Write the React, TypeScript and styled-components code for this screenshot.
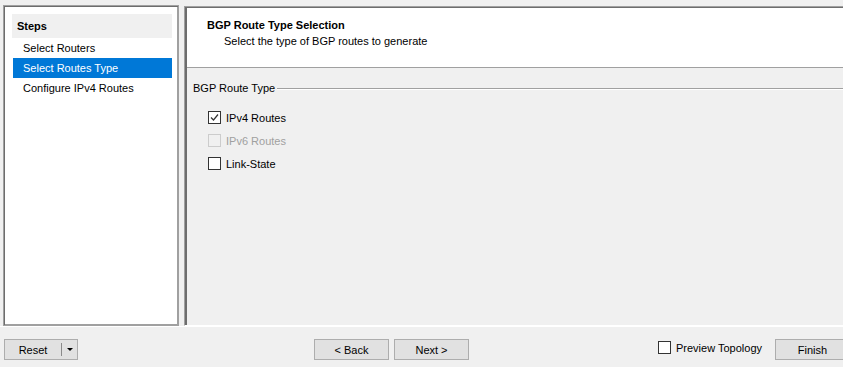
import React from 'react'
import styled, { createGlobalStyle } from 'styled-components'

const GlobalStyle = createGlobalStyle`
    html, body {
        margin: 0;
        padding: 0;
        background: #f0f0f0;
        font-family: "Liberation Sans", Arial, sans-serif;
        font-size: 11px;
        color: #000;
    }
`

const StyledWindow = styled.div`
    width: 843px;
    height: 367px;
    display: flex;
    flex-direction: column;
    overflow: hidden;
    background: #f0f0f0;
`

const StyledMain = styled.div`
    display: flex;
    align-items: flex-start;
    height: 326px;
    padding: 5px 0 0 3px;
    box-sizing: border-box;
    gap: 5px;
`

const StyledStepsPanel = styled.div`
    width: 176px;
    height: 321px;
    box-sizing: border-box;
    background: #fff;
    border: 1px solid #a0a0a0;
    box-shadow: inset 1px 1px 0 #6d6d6d, inset -1px -1px 0 #a0a0a0;
    padding: 8px 6px 0 8px;
`

const StyledStepsHeader = styled.div`
    height: 24px;
    display: flex;
    align-items: center;
    padding-left: 5px;
    background: #f0f0f0;
    font-weight: bold;
`

const StyledStepItem = styled.div<{ $active?: boolean }>`
    height: 20px;
    display: flex;
    align-items: center;
    margin-left: 1px;
    padding-left: 10px;
    background: ${p => (p.$active ? '#0078d7' : 'transparent')};
    color: ${p => (p.$active ? '#fff' : '#000')};
`

const StyledContentPanel = styled.div`
    flex: 1;
    height: 320px;
    margin-top: 1px;
    margin-right: -6px;
    box-sizing: border-box;
    border: 1px solid #a0a0a0;
    border-bottom-color: #fff;
    box-shadow: inset 2px 1px 0 #6d6d6d;
    display: flex;
    flex-direction: column;
`

const StyledHeader = styled.div`
    height: 60px;
    margin: 1px 0 0 2px;
    background: #fff;
    border-bottom: 1px solid #a0a0a0;
    padding: 10px 0 0 20px;
    box-sizing: border-box;
`

const StyledTitle = styled.div`
    font-weight: bold;
    line-height: 14px;
`

const StyledSubtitle = styled.div`
    margin: 2px 0 0 17px;
    line-height: 14px;
`

const StyledBody = styled.div`
    flex: 1;
    padding: 13px 0 0 8px;
`

const StyledGroupLegend = styled.div`
    display: flex;
    align-items: center;
    gap: 2px;
    line-height: 14px;

    &::after {
        content: '';
        flex: 1;
        height: 1px;
        background: #a0a0a0;
        box-shadow: 0 1px 0 #fff;
    }
`

const StyledOptions = styled.div`
    display: flex;
    flex-direction: column;
    gap: 10px;
    padding: 16px 0 0 15px;
`

const StyledCheckRow = styled.label<{ $disabled?: boolean }>`
    display: flex;
    align-items: center;
    gap: 5px;
    height: 13px;
    color: ${p => (p.$disabled ? '#a0a0a0' : '#000')};
`

const StyledBox = styled.span<{ $disabled?: boolean }>`
    width: 13px;
    height: 13px;
    box-sizing: border-box;
    border: 1px solid ${p => (p.$disabled ? '#cccccc' : '#333333')};
    background: ${p => (p.$disabled ? '#f0f0f0' : '#fff')};
    display: flex;
    align-items: center;
    justify-content: center;
`

const StyledBottomBar = styled.div`
    flex: 1;
    display: flex;
    align-items: flex-start;
    padding: 12px 0 0 4px;
    border-top: 1px solid #fff;
`

const StyledButton = styled.button<{ $width?: number }>`
    width: ${p => p.$width ?? 75}px;
    height: 21px;
    box-sizing: border-box;
    background: #e1e1e1;
    border: 1px solid #adadad;
    font-family: "Liberation Sans", Arial, sans-serif;
    font-size: 11px;
    color: #000;
    padding: 0;
    display: flex;
    align-items: center;
    justify-content: center;
`

const StyledSplitLabel = styled.span`
    flex: 1;
    text-align: center;
`

const StyledSplitArrow = styled.span`
    width: 15px;
    height: 13px;
    border-left: 1px solid #8a8a8a;
    display: flex;
    align-items: center;
    justify-content: center;

    &::after {
        content: '';
        border-left: 3px solid transparent;
        border-right: 3px solid transparent;
        border-top: 3px solid #000;
    }
`

const StyledNavGroup = styled.div`
    display: flex;
    gap: 5px;
    margin-left: 236px;
`

const StyledSpacer = styled.div`
    flex: 1;
`

const StyledPreview = styled(StyledCheckRow)`
    margin-top: 2px;
    margin-right: 13px;
`

const CheckBox = ({ label, checked, disabled }: { label: string; checked?: boolean; disabled?: boolean }) => (
    <StyledCheckRow $disabled={disabled}>
        <StyledBox $disabled={disabled}>
            {checked && (
                <svg width="9" height="9" viewBox="0 0 9 9">
                    <path d="M1 4.5 L3.5 7 L8 1.5" fill="none" stroke="#333" strokeWidth="1.2" />
                </svg>
            )}
        </StyledBox>
        {label}
    </StyledCheckRow>
)

const App = () => {
    return (
        <StyledWindow>
            <GlobalStyle />
            <StyledMain>
                <StyledStepsPanel>
                    <StyledStepsHeader>Steps</StyledStepsHeader>
                    <StyledStepItem>Select Routers</StyledStepItem>
                    <StyledStepItem $active>Select Routes Type</StyledStepItem>
                    <StyledStepItem>Configure IPv4 Routes</StyledStepItem>
                </StyledStepsPanel>
                <StyledContentPanel>
                    <StyledHeader>
                        <StyledTitle>BGP Route Type Selection</StyledTitle>
                        <StyledSubtitle>Select the type of BGP routes to generate</StyledSubtitle>
                    </StyledHeader>
                    <StyledBody>
                        <StyledGroupLegend>BGP Route Type</StyledGroupLegend>
                        <StyledOptions>
                            <CheckBox label="IPv4 Routes" checked />
                            <CheckBox label="IPv6 Routes" disabled />
                            <CheckBox label="Link-State" />
                        </StyledOptions>
                    </StyledBody>
                </StyledContentPanel>
            </StyledMain>
            <StyledBottomBar>
                <StyledButton $width={74}>
                    <StyledSplitLabel>Reset</StyledSplitLabel>
                    <StyledSplitArrow />
                </StyledButton>
                <StyledNavGroup>
                    <StyledButton>&lt; Back</StyledButton>
                    <StyledButton>Next &gt;</StyledButton>
                </StyledNavGroup>
                <StyledSpacer />
                <StyledPreview>
                    <StyledBox />
                    Preview Topology
                </StyledPreview>
                <StyledButton style={{ marginRight: -7 }}>Finish</StyledButton>
            </StyledBottomBar>
        </StyledWindow>
    )
}

export default App
